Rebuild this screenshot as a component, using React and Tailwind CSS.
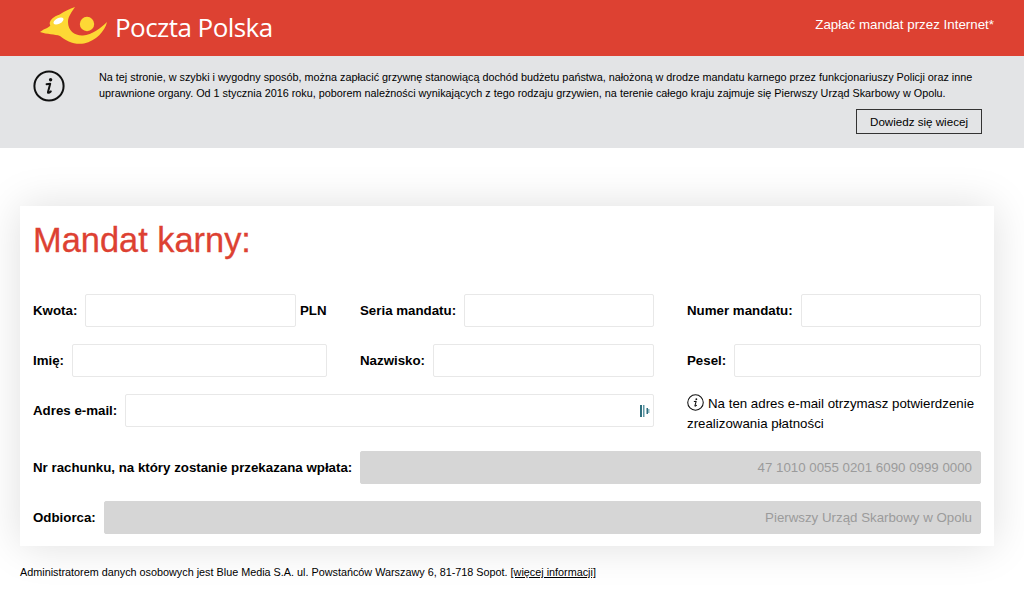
const SANS = 'font-["Liberation_Sans",Arial,sans-serif]';

function Logo() {
  return (
    <svg width="68" height="40" viewBox="40 5 68 40" className="shrink-0 -mt-[6px]">
      <path d="M40 32 C45 28 50 28 52 23 C55 16 64 11 75 7 C72 12 68 16 68 22 C68 31 75 36 83 35.5 C92 35 101 28 107 22 C105 31 96 41 84 43.5 C74 45 66 41 60 36 C55 34 47 34.5 40 32 Z" fill="#fdd835" />
      <ellipse cx="58" cy="21" rx="9" ry="5.5" transform="rotate(-28 58 21)" fill="#fdd835" />
      <ellipse cx="58.5" cy="21" rx="5.5" ry="2.8" transform="rotate(-28 58.5 21)" fill="#ffffff" />
      <circle cx="87" cy="24" r="7.2" fill="#fdd835" />
    </svg>
  );
}

function InfoIcon({ size }) {
  return (
    <svg width={size} height={size} viewBox="0 0 32 32" className="shrink-0">
      <circle cx="16" cy="16" r="14.6" fill="none" stroke="#111" strokeWidth="2" />
      <circle cx="17.6" cy="9.8" r="1.7" fill="#111" />
      <path d="M13.6 14.2 L17.2 13.7 L15 22 C14.8 23.1 15.6 23.2 17.8 21.4" fill="none" stroke="#111" strokeWidth="2" strokeLinecap="round" strokeLinejoin="round" />
    </svg>
  );
}

function Field({ label, value, suffix, disabled, children, className = '' }) {
  return (
    <div className={`flex items-center h-[33px] ${className}`}>
      <label className="font-bold text-[13.3px] text-black whitespace-nowrap mr-2">{label}</label>
      <div className={`relative flex-1 min-w-0 h-full rounded-[2px] border flex items-center justify-end px-[8px] text-[13.3px] text-[#9b9b9b] ${disabled ? 'bg-[#d6d6d6] border-[#d6d6d6]' : 'bg-white border-[#e8e8e8]'}`}>
        {value}
        {children}
      </div>
      {suffix && <span className="font-bold text-[13.3px] text-black ml-[4px] w-[27px]">{suffix}</span>}
    </div>
  );
}

export default function App() {
  return (
    <div className={`${SANS} w-[1024px] h-[592px] overflow-hidden bg-white`}>
      <header className="h-[56px] bg-[#dd4132] flex items-center justify-between pl-[40px] pr-[30px]">
        <div className="flex items-center gap-[7px]">
          <Logo />
          <span className="font-['Open_Sans',sans-serif] text-[26px] tracking-[-0.55px] text-white -mt-[2px]">Poczta Polska</span>
        </div>
        <span className="text-[13.35px] text-white -mt-[6px]">Zapłać mandat przez Internet*</span>
      </header>

      <section className="h-[92px] bg-[#e3e4e6] flex pl-[33px] pr-[42px] pt-[14px]">
        <InfoIcon size={32} />
        <div className="ml-[34px] flex-1">
          <p className="text-[10.82px] leading-[16px] text-black whitespace-nowrap -mt-[1px]">
            Na tej stronie, w szybki i wygodny sposób, można zapłacić grzywnę stanowiącą dochód budżetu państwa, nałożoną w drodze mandatu karnego przez funkcjonariuszy Policji oraz inne
            <br />
            uprawnione organy. Od 1 stycznia 2016 roku, poborem należności wynikających z tego rodzaju grzywien, na terenie całego kraju zajmuje się Pierwszy Urząd Skarbowy w Opolu.
          </p>
          <div className="flex justify-end mt-[8px]">
            <button className="w-[126px] h-[25px] border border-[#333] text-[11.6px] text-black">Dowiedz się wiecej</button>
          </div>
        </div>
      </section>

      <div className="pt-[58px] px-[20px]">
        <main className="bg-white w-[974px] h-[340px] px-[13px] shadow-[0_0_40px_rgba(0,0,0,0.13)]">
          <h1 className="text-[34.4px] leading-[42px] text-[#dd4132] pt-[13px] [-webkit-text-stroke:0.3px_#dd4132]">Mandat karny:</h1>
          <div className="grid grid-cols-[294px_294px_294px] gap-x-[33px] gap-y-[17px] mt-[33px]">
            <Field label="Kwota:" suffix="PLN" />
            <Field label="Seria mandatu:" />
            <Field label="Numer mandatu:" />
            <Field label="Imię:" />
            <Field label="Nazwisko:" />
            <Field label="Pesel:" />
            <Field label="Adres e-mail:" className="col-span-2">
              <svg width="10" height="12" viewBox="0 0 10 12" className="absolute right-[3px] top-[10px]">
                <rect x="0" y="0" width="2" height="12" fill="#2f6f7e" />
                <rect x="3" y="0" width="1.5" height="12" fill="#5f98a5" />
                <rect x="6.5" y="3" width="1.5" height="6" fill="#2f6f7e" />
                <rect x="8" y="4" width="1.5" height="4" fill="#8db8c2" />
              </svg>
            </Field>
            <p className="h-[33px] text-[13.3px] leading-[20px] text-black">
              <span className="inline-block align-[-3px] mr-[4px]"><InfoIcon size={17} /></span>
              Na ten adres e-mail otrzymasz potwierdzenie zrealizowania płatności
            </p>
            <Field label="Nr rachunku, na który zostanie przekazana wpłata:" value="47 1010 0055 0201 6090 0999 0000" disabled className="col-span-3 mt-[7px]" />
            <Field label="Odbiorca:" value="Pierwszy Urząd Skarbowy w Opolu" disabled className="col-span-3" />
          </div>
        </main>
        <p className="text-[10.82px] text-black mt-[18px]">
          Administratorem danych osobowych jest Blue Media S.A. ul. Powstańców Warszawy 6, 81-718 Sopot. <span className="underline">[więcej informacji]</span>
        </p>
      </div>
    </div>
  );
}
